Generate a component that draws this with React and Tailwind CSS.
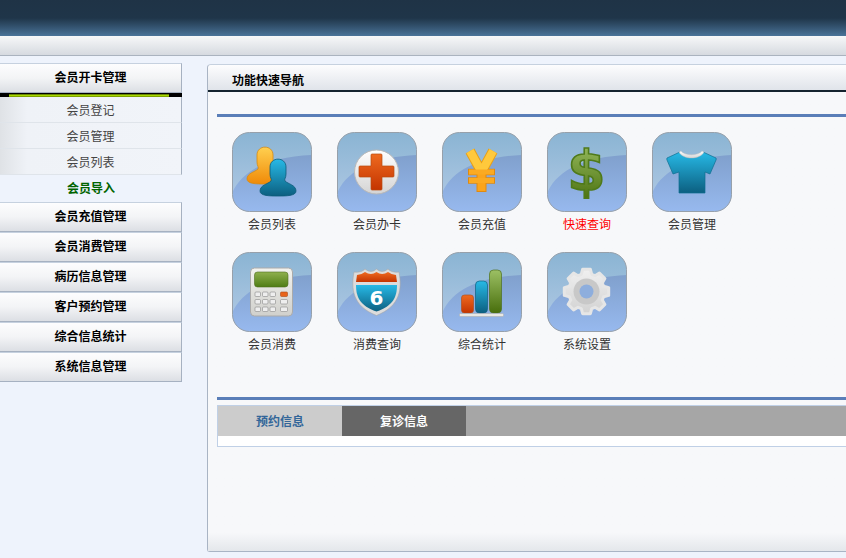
const font = { fontFamily: '"Noto Sans CJK SC", "Liberation Sans", sans-serif' };

function gearPath() {
  const pts = [];
  const teeth = 8;
  for (let i = 0; i < teeth; i++) {
    const a = (i * Math.PI * 2) / teeth - Math.PI / 2;
    const step = Math.PI / teeth;
    [[-0.74, 18], [-0.44, 22.5], [0.44, 22.5], [0.74, 18]].forEach(([k, r]) => {
      const t = a + k * step;
      pts.push(`${(39.5 + r * Math.cos(t)).toFixed(1)},${(39.5 + r * Math.sin(t)).toFixed(1)}`);
    });
  }
  return pts.join(" ");
}

function Defs() {
  const g = (id, a, b) => (
    <linearGradient id={id} x1="0" y1="0" x2="0" y2="1">
      <stop offset="0" stopColor={a} />
      <stop offset="1" stopColor={b} />
    </linearGradient>
  );
  return (
    <svg className="absolute w-0 h-0">
      <defs>
        {g("tileTop", "#8ab4d3", "#b4cbe6")}
        {g("tileLow", "#80a0cd", "#97b9ee")}
        {g("orange", "#ffd050", "#f08a08")}
        {g("blue", "#27b9e6", "#0c5f80")}
        {g("red", "#ee6a20", "#c43400")}
        {g("green", "#9cc064", "#486e0c")}
        {g("lcd", "#8fb04e", "#4f7d14")}
        {g("white", "#ffffff", "#d4d4d4")}
        {g("calc", "#f2f2ee", "#d0d0cc")}
        {g("bar", "#f0f0f0", "#d2d2d2")}
      </defs>
    </svg>
  );
}

function Tile({ children }) {
  return (
    <svg width="80" height="80" viewBox="0 0 80 80" className="block">
      <rect x="0.5" y="0.5" width="79" height="79" rx="17" fill="url(#tileTop)" />
      <path d="M0.5 60 C12 36 40 25 79.5 23 V62 A17 17 0 0 1 62 79.5 H18 A17 17 0 0 1 0.5 62 Z" fill="url(#tileLow)" />
      <rect x="0.5" y="0.5" width="79" height="79" rx="17" fill="none" stroke="#97a0aa" />
      {children}
    </svg>
  );
}

const Person = ({ x, y, fill, stroke }) => (
  <path
    transform={`translate(${x} ${y})`}
    d="M-8 8 C-8 -2.5 8 -2.5 8 8 V15 C8 19 6 20 7 22 C10 25 18 26 18 32 C18 37 8 37 0 37 C-8 37 -18 37 -18 32 C-18 26 -10 25 -7 22 C-6 20 -8 19 -8 15 Z"
    fill={fill}
    stroke={stroke}
    strokeWidth="0.8"
  />
);

const icons = {
  users: (
    <>
      <Person x={33} y={15} fill="url(#orange)" stroke="#d88a10" />
      <Person x={46} y={27} fill="url(#blue)" stroke="#0c5a78" />
    </>
  ),
  plus: (
    <>
      <circle cx="39.5" cy="40" r="22" fill="url(#white)" stroke="#b8b8b8" />
      <path d="M34 23 Q34 22 35 22 H44 Q45 22 45 23 V34 H56 Q57 34 57 35 V44 Q57 45 56 45 H45 V57 Q45 58 44 58 H35 Q34 58 34 57 V45 H23 Q22 45 22 44 V35 Q22 34 23 34 H34 Z" fill="url(#red)" stroke="#b84a10" strokeWidth="0.7" />
    </>
  ),
  yen: (
    <g fill="none" strokeLinecap="butt">
      <path d="M28 19 L39.5 40 L51 19" stroke="#e8a018" strokeWidth="10" />
      <path d="M39.5 40 V60" stroke="#e08a10" strokeWidth="10" />
      <path d="M26 40 H53 M26 48.500 H53" stroke="#e08a10" strokeWidth="6.500" />
      <path d="M28 19 L39.5 40 L51 19" stroke="#ffc93c" strokeWidth="8" />
      <path d="M39.5 40 V59" stroke="#fba41c" strokeWidth="8" />
      <path d="M27 40 H52 M27 48.500 H52" stroke="#fbaa22" strokeWidth="5" />
    </g>
  ),
  dollar: (
    <text x="39.5" y="58" textAnchor="middle" fontSize="55" fontWeight="700" fontFamily="'DejaVu Sans', sans-serif" fill="url(#green)" stroke="#4f7a1a" strokeWidth="1.6">$</text>
  ),
  shirt: (
    <>
      <path d="M28 20 C33 26 46 26 51 20 L64 26 Q64.500 27 64 28 L58 42 L53 40 V61 H27 V40 L21 42 L15 28 Q14.500 27 15 26 Z" fill="url(#blue)" stroke="#0f6e90" strokeWidth="0.7" />
      <path d="M29 19 C33 24 46 24 50 19 L52 20 C48 28 31 28 27 20 Z" fill="url(#white)" stroke="#b8b8b8" strokeWidth="0.4" />
    </>
  ),
  calc: (
    <>
      <rect x="18.500" y="16" width="42" height="48" rx="4" fill="url(#calc)" stroke="#aaa" />
      <rect x="22.500" y="20" width="33.500" height="15" rx="3" fill="url(#lcd)" stroke="#4f6f20" strokeWidth="0.6" />
      {[40, 47.5, 55].map((y) =>
        [23, 30.5, 38].map((x) => (
          <rect key={`${x}-${y}`} x={x} y={y} width="5.500" height="4.500" rx="1" fill="#eee" stroke="#888" strokeWidth="0.6" />
        ))
      )}
      <rect x="48.500" y="40" width="7" height="4.500" rx="1" fill="#e8641a" stroke="#a84a18" strokeWidth="0.6" />
      <rect x="48.500" y="47.500" width="7" height="4.500" rx="1" fill="#eee" stroke="#888" strokeWidth="0.6" />
      <rect x="48.500" y="55" width="7" height="4.500" rx="1" fill="#eee" stroke="#888" strokeWidth="0.6" />
    </>
  ),
  shield: (
    <>
      <path d="M17 20 Q24 21 28 17 Q34 22 39.500 17 Q45 22 51 17 Q55 21 62 20 C65 36 64 54 39.500 63.500 C15 54 14 36 17 20 Z" fill="#dcdcdc" stroke="#a8a8a8" strokeWidth="0.6" />
      <path d="M20 23 Q24 23 28 20 Q34 24 39.500 20 Q45 24 51 20 Q55 23 59 23 L60 30 H19 Z" fill="url(#red)" />
      <path d="M19 33 H60 C60 45 56 54 39.500 59.500 C23 54 19 45 19 33 Z" fill="url(#blue)" />
      <text x="39.500" y="53" textAnchor="middle" fontSize="20" fontWeight="700" fontFamily="'DejaVu Sans', sans-serif" fill="#fff">6</text>
    </>
  ),
  bars: (
    <>
      <rect x="19.500" y="43" width="12" height="18" rx="3" fill="url(#red)" stroke="#b05020" strokeWidth="0.7" />
      <rect x="33.500" y="29" width="12" height="32" rx="4" fill="url(#blue)" stroke="#106080" strokeWidth="0.7" />
      <rect x="47.500" y="18" width="12" height="43" rx="4" fill="url(#green)" stroke="#4e7020" strokeWidth="0.7" />
      <rect x="17.500" y="61.500" width="44" height="3" rx="1" fill="#e8e8e4" stroke="#a8a8a8" strokeWidth="0.5" />
    </>
  ),
  gear: (
    <>
      <polygon points={gearPath()} fill="url(#bar)" stroke="#e6e6e6" strokeWidth="3" strokeLinejoin="round" />
      <circle cx="39.500" cy="39.500" r="13" fill="#c8c8c8" />
      <circle cx="39.500" cy="39.500" r="7" fill="#8eaedd" />
    </>
  ),
};

const rows = [
  ["会员列表", "users"],
  ["会员办卡", "plus"],
  ["会员充值", "yen"],
  ["快速查询", "dollar", true],
  ["会员管理", "shirt"],
  ["会员消费", "calc"],
  ["消费查询", "shield"],
  ["综合统计", "bars"],
  ["系统设置", "gear"],
];

function SideHead({ children }) {
  return (
    <div className="h-[30px] pb-[2px] flex items-center justify-center border-t border-r border-b border-t-[#c6d1df] border-r-[#a6b1c1] border-b-[#a6b1c1] bg-gradient-to-b from-[#fdfdfe] via-[#f3f4f6] to-[#dcdfe4] text-[12px] font-bold text-black">
      {children}
    </div>
  );
}

function SubItem({ children, active }) {
  if (active)
    return <div className="h-[26px] flex items-center justify-center text-[12px] font-bold text-[#006400]">{children}</div>;
  return (
    <div className="h-[26px] flex items-center justify-center border-r border-r-[#a6b1c1] border-b border-b-[#dfe4ea] bg-gradient-to-r from-[#dfe2e6] via-[#eff2f7] via-[15%] to-[#f1f4f9] text-[12px] text-[#444]">
      {children}
    </div>
  );
}

export default function App() {
  return (
    <div style={font} className="w-[846px] h-[558px] overflow-hidden bg-[#eef3fc] flex flex-col">
      <Defs />
      <div className="h-[36px] shrink-0 bg-gradient-to-b from-[#1f3346] via-[#1f3549] via-[50%] to-[#4a7499]" />
      <div className="h-[20px] shrink-0 bg-gradient-to-b from-[#f7f8f9] to-[#d6dae0] border-b border-b-[#aab3bf]" />
      <div className="flex flex-1 min-h-0">
        <aside className="w-[182px] shrink-0 mt-[7px]">
          <SideHead>会员开卡管理</SideHead>
          <div className="h-[4px] bg-black pl-[9px] pr-[13px] flex items-center">
            <div className="h-[3px] w-full bg-gradient-to-b from-[#4a6000] via-[#a8d800] to-[#6a8a00]" />
          </div>
          <SubItem>会员登记</SubItem>
          <SubItem>会员管理</SubItem>
          <SubItem>会员列表</SubItem>
          <SubItem active>会员导入</SubItem>
          <div className="mt-px">
            <SideHead>会员充值管理</SideHead>
            <SideHead>会员消费管理</SideHead>
            <SideHead>病历信息管理</SideHead>
            <SideHead>客户预约管理</SideHead>
            <SideHead>综合信息统计</SideHead>
            <SideHead>系统信息管理</SideHead>
          </div>
        </aside>
        <main className="ml-[25px] flex-1 mt-[8px] h-[488px] rounded-tl-[4px] rounded-bl-[3px] border-l border-b border-t border-[#a9b4c4] border-t-[#c6d1df] bg-[#f7f8fa] flex flex-col">
          <div className="h-[27px] shrink-0 rounded-tl-[4px] bg-gradient-to-b from-[#fdfdfe] to-[#e0e4ea] border-b-2 border-b-[#15242f] pl-[24px] flex items-end">
            <span className="text-[12px] font-bold text-black leading-[20px]">功能快速导航</span>
          </div>
          <div className="flex-1 pl-[9px] pt-[22px] flex flex-col bg-gradient-to-b from-[#f7f8fa] from-[96%] to-[#e4e7eb]">
            <div className="h-[3px] bg-[#5a7eb8]" />
            <div className="mt-[15px] ml-[15px] grid grid-cols-[repeat(5,80px)] gap-x-[25px] auto-rows-[120px]">
              {rows.map(([label, key, red]) => (
                <div key={label}>
                  <Tile>{icons[key]}</Tile>
                  <div className={`mt-[3px] text-center text-[12px] leading-[18px] ${red ? "text-[#ff0000]" : "text-[#333]"}`}>{label}</div>
                </div>
              ))}
            </div>
            <div className="mt-[25px] h-[3px] bg-[#5a7eb8]" />
            <div className="mt-[5px] border border-[#c0d0e6] border-r-0 bg-white h-[42px]">
              <div className="h-[30px] flex bg-[#a6a6a6]">
                <div className="w-[124px] bg-[#cccccc] flex items-center justify-center text-[12px] font-bold text-[#336699]">预约信息</div>
                <div className="w-[124px] bg-[#666666] flex items-center justify-center text-[12px] font-bold text-white">复诊信息</div>
              </div>
            </div>
          </div>
        </main>
      </div>
    </div>
  );
}
